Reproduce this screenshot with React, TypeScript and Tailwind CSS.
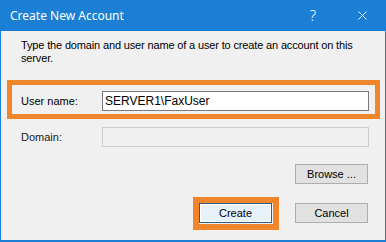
export default function App() {
  return (
    <div className="relative flex h-[242px] w-[386px] flex-col border-x border-b-2 border-[#1a7fd5] bg-[#f0f0f0] font-['Liberation_Sans',Arial,sans-serif] text-[11px] text-black">
      {/* Title bar */}
      <div className="flex h-[31px] shrink-0 items-center bg-[#1a7fd5] pl-[9px] text-white">
        <span className="font-['Noto_Sans',sans-serif] text-[12px]">Create New Account</span>
        <span className="ml-auto mr-[42px] font-['Noto_Sans',sans-serif] text-[15px] font-light">?</span>
        <svg width="9" height="9" viewBox="0 0 9 9" className="mr-[18px]">
          <path d="M0.5 0.5 L8.5 8.5 M8.5 0.5 L0.5 8.5" stroke="white" strokeWidth="1" />
        </svg>
      </div>

      {/* Body */}
      <div className="flex flex-1 flex-col pl-[20px] pr-[16px] pt-[8px]">
        <p className="leading-[13px] tracking-[-0.15px]">
          Type the domain and user name of a user to create an account on this server.
        </p>

        <div className="mt-[26px] flex items-center">
          <span className="w-[81px] shrink-0 leading-[13px]">User name:</span>
          <div className="flex h-[20px] flex-1 items-center border border-[#7a7a7a] bg-white pl-[2px] text-[12px]">
            SERVER1\FaxUser
          </div>
        </div>

        <div className="mt-[16px] flex items-center">
          <span className="w-[81px] shrink-0 leading-[13px] text-[#222]">Domain:</span>
          <div className="h-[20px] flex-1 border border-[#cccccc] bg-[#f0f0f0]" />
        </div>

        <div className="mr-[1px] mt-[17px] flex justify-end">
          <button className="h-[20px] w-[73px] border border-[#adadad] bg-[#e1e1e1] leading-[18px]">Browse ...</button>
        </div>

        <div className="mr-[1px] mt-[19px] flex justify-end gap-[23px]">
          <button className="h-[20px] w-[73px] border border-[#2a5d8a] bg-[#e5f1fb] leading-[18px] shadow-[inset_0_0_0_1px_#ffffff]">
            Create
          </button>
          <button className="h-[20px] w-[73px] border border-[#adadad] bg-[#e1e1e1] leading-[18px]">Cancel</button>
        </div>
      </div>

      {/* Orange annotation highlights */}
      <div className="pointer-events-none absolute left-[6px] top-[80px] h-[39px] w-[373px] border-[5px] border-[#f0862c]" />
      <div className="pointer-events-none absolute left-[192px] top-[197px] h-[33px] w-[86px] border-[6px] border-[#f0862c]" />
    </div>
  );
}
